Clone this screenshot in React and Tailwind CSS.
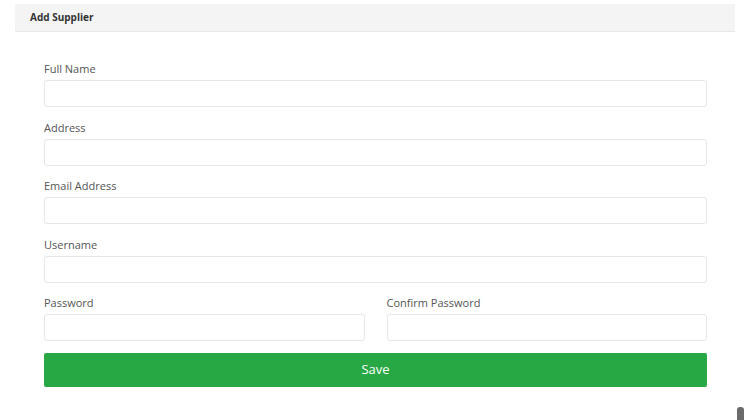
import { useState } from 'react'

const font = { fontFamily: '"Open Sans", "Noto Sans", sans-serif' }

// Single labelled text field
function Field({ label, type = 'text', value, onChange }) {
  return (
    <div className="flex flex-col">
      <label className="text-[11px] leading-[14px] text-[#555] mb-[4px]">{label}</label>
      <input
        type={type}
        value={value}
        onChange={onChange}
        className="h-[27px] w-full rounded-[3px] border border-[#e6e6e6] bg-white px-2 text-[12px] outline-none"
      />
    </div>
  )
}

export default function App() {
  const [form, setForm] = useState({
    fullName: '',
    address: '',
    email: '',
    username: '',
    password: '',
    confirm: '',
  })

  const set = key => e => setForm({ ...form, [key]: e.target.value })

  return (
    <div className="relative h-[420px] w-[750px] overflow-hidden bg-white" style={font}>
      <div className="mx-[15px] mt-[4px]">
        {/* header */}
        <div className="flex h-[28px] items-center border-b border-[#e8e8e8] bg-[#f4f4f4] px-[15px]">
          <span className="text-[10px] font-bold text-[#333]">Add Supplier</span>
        </div>

        {/* body */}
        <div className="pl-[29px] pr-[28px] pt-[30px]">
          <div className="flex flex-col gap-[13.5px]">
            <Field label="Full Name" value={form.fullName} onChange={set('fullName')} />
            <Field label="Address" value={form.address} onChange={set('address')} />
            <Field label="Email Address" value={form.email} onChange={set('email')} />
            <Field label="Username" value={form.username} onChange={set('username')} />
            <div className="grid grid-cols-2 gap-[22px]">
              <Field label="Password" type="password" value={form.password} onChange={set('password')} />
              <Field label="Confirm Password" type="password" value={form.confirm} onChange={set('confirm')} />
            </div>
          </div>

          <button className="mt-[12px] h-[34px] w-full rounded-[2px] bg-[#28a745] text-[13px] text-white">
            Save
          </button>
        </div>
      </div>

      <div className="absolute left-[737px] top-[407px] h-[16px] w-[7px] rounded-t-[3px] bg-[#6b6b6b]" />
    </div>
  )
}
